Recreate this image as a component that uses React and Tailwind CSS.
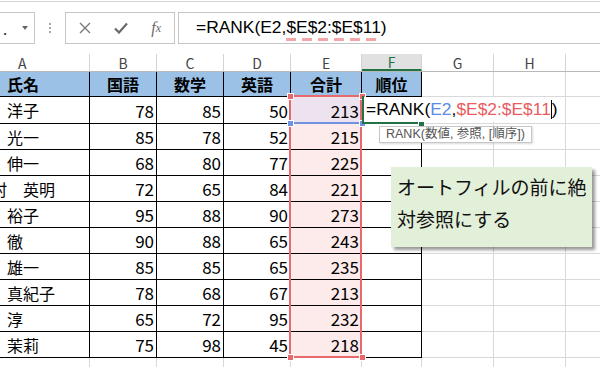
import React from 'react';

const COLS = ['w-[90px]', 'w-[67px]', 'w-[67px]', 'w-[67px]', 'w-[71px]', 'w-[60px]', 'w-[72px]', 'w-[72px]', 'w-[34px]'];
const LETTERS = ['A', 'B', 'C', 'D', 'E', 'F', 'G', 'H', ''];
const HEADS = ['氏名', '国語', '数学', '英語', '合計', '順位'];

const STUDENTS = [
  ['洋子', 78, 85, 50, 213],
  ['光一', 85, 78, 52, 215],
  ['伸一', 68, 80, 77, 225],
  ['村　英明', 72, 65, 84, 221],
  ['裕子', 95, 88, 90, 273],
  ['徹', 90, 88, 65, 243],
  ['雄一', 85, 85, 65, 235],
  ['真紀子', 78, 68, 67, 213],
  ['淳', 65, 72, 95, 232],
  ['茉莉', 75, 98, 45, 218],
];

const Handle = ({ className }) => (
  <div className={`absolute w-[7px] h-[7px] border border-white ${className}`} />
);

const FormulaText = () => (
  <>
    =RANK(E2,
    <span className="relative">
      $E$2:$E$11
      <span className="absolute left-0 right-0 top-full mt-[1px] h-[3px] bg-[repeating-linear-gradient(90deg,#f3a5a8_0_10px,transparent_10px_16px)]" />
    </span>
    )
  </>
);

export default function App() {
  return (
    <div className="relative w-[600px] h-[367px] overflow-hidden bg-white font-['Noto_Sans_CJK_JP',sans-serif] text-black">
      {/* Formula bar */}
      <div className="h-[54px] pt-[1px]">
        <div className="h-px bg-[#d6d6d6]" />
        <div className="mt-[10px] flex h-[32px]">
          <div className="relative w-[35px] border-y border-r border-[#c6c6c6]">
            <span className="absolute left-[3px] top-[8px] text-[15px] leading-none text-[#222]">.</span>
            <div className="absolute left-[22px] top-[13px] w-0 h-0 border-x-[3px] border-x-transparent border-t-[4px] border-t-[#666]" />
          </div>
          <div className="w-[30px] flex flex-col items-center justify-center gap-[2px]">
            <div className="w-[2px] h-[2px] bg-[#a8a8a8]" />
            <div className="w-[2px] h-[2px] bg-[#a8a8a8]" />
            <div className="w-[2px] h-[2px] bg-[#a8a8a8]" />
          </div>
          <div className="w-[110px] flex border border-[#c6c6c6] pl-px">
            <div className="w-[36px] flex items-center justify-center">
              <svg width="12" height="12" viewBox="0 0 12 12">
                <path d="M1 1L11 11M11 1L1 11" stroke="#7a7a7a" strokeWidth="1.4" />
              </svg>
            </div>
            <div className="w-[36px] flex items-center justify-center">
              <svg width="14" height="12" viewBox="0 0 14 12">
                <path d="M1 6.5L5 10.5L13 1.5" stroke="#6a6a6a" strokeWidth="2.2" fill="none" />
              </svg>
            </div>
            <div className="w-[36px] flex items-center justify-center font-['Liberation_Serif',serif] italic text-[#6a6a6a] leading-none">
              <span className="text-[16px]">f</span>
              <span className="text-[12px]">x</span>
            </div>
          </div>
          <div className="ml-[3px] flex-1 -mr-[2px] flex items-center border border-[#c6c6c6] pl-[17px] font-['Liberation_Sans','Noto_Sans_CJK_JP',sans-serif] text-[17.4px] leading-none">
            <FormulaText />
          </div>
        </div>
      </div>

      {/* Column letters */}
      <div className="flex h-[18px] border-b border-[#b8b8b8] text-[14px] text-[#444]">
        {LETTERS.map((l, i) => (
          <div
            key={i}
            className={`${COLS[i]} flex items-center leading-none ${i === 8 ? '' : 'border-r border-[#d4d4d4]'} ${
              i === 0 ? 'justify-start pl-[18px]' : 'justify-center'
            } ${i === 5 ? 'bg-[#e1e1e1] text-[#217346] border-b-2 border-b-[#217346]' : ''}`}
          >
            {l}
          </div>
        ))}
      </div>

      {/* Header row */}
      <div className="flex h-[25px] text-[16px] font-bold leading-none">
        {COLS.map((w, i) => (
          <div
            key={i}
            className={`${w} flex items-center ${
              i < 6
                ? 'bg-[#9bc2e6] border-r border-b border-black'
                : i < 8
                ? 'border-r border-b border-[#d9d9d9]'
                : 'border-b border-[#d9d9d9]'
            } ${i === 0 ? 'pl-[7px]' : 'justify-center'}`}
          >
            {HEADS[i]}
          </div>
        ))}
      </div>

      {/* Data rows */}
      {STUDENTS.map((s, r) => (
        <div key={r} className={`flex ${r === 0 ? 'h-[27px]' : 'h-[26px]'} leading-none`}>
          <div className={`${COLS[0]} flex items-center overflow-hidden whitespace-nowrap border-r border-b border-black pl-[7px] text-[16px]`}>
            <span className={r === 3 ? '-ml-[16px]' : ''}>{s[0]}</span>
          </div>
          {[1, 2, 3, 4].map((c) => (
            <div
              key={c}
              className={`${COLS[c]} flex items-center justify-end border-r border-b border-black pr-[2px] text-[17px] ${
                c === 4 ? (r === 0 ? 'bg-[#ece3ee]' : 'bg-[#fdeaea]') : ''
              }`}
            >
              {s[c]}
            </div>
          ))}
          <div className={`${COLS[5]} border-r border-b border-black`} />
          <div className={`${COLS[6]} border-r border-b border-[#d9d9d9]`} />
          <div className={`${COLS[7]} border-r border-b border-[#d9d9d9]`} />
          <div className={`${COLS[8]} border-b border-[#d9d9d9]`} />
        </div>
      ))}

      {/* Empty row below table */}
      <div className="flex h-[26px]">
        {COLS.map((w, i) => (
          <div key={i} className={`${w} ${i === 8 ? '' : 'border-r border-[#d9d9d9]'} border-b border-[#d9d9d9]`} />
        ))}
      </div>

      {/* Range reference $E$2:$E$11 */}
      <div className="absolute left-[289px] top-[95px] w-[73px] h-[263px] border-2 border-[#e8696b]" />
      <div className="absolute left-[291px] top-[122px] w-[69px] h-[2px] bg-[#7092e0]" />
      <Handle className="left-[287px] top-[93px] bg-[#e8696b]" />
      <Handle className="left-[359px] top-[93px] bg-[#e8696b]" />
      <Handle className="left-[287px] top-[354px] bg-[#e8696b]" />
      <Handle className="left-[359px] top-[354px] bg-[#e8696b]" />
      <Handle className="left-[287px] top-[120px] bg-[#7092e0]" />
      <Handle className="left-[359px] top-[120px] bg-[#7092e0]" />

      {/* Cell F2 in edit mode */}
      <div className="absolute left-[362px] top-[97px] w-[203px] h-[25px] bg-white flex items-center pl-[4px] font-['Liberation_Sans','Noto_Sans_CJK_JP',sans-serif] text-[17.4px] leading-none whitespace-nowrap">
        =RANK(<span className="text-[#5a8be6]">E2</span>,<span className="text-[#ea5b60]">$E$2:$E$11</span>
        <span className="inline-block w-px h-[19px] bg-black align-[-4px]" />)
      </div>
      <div className="absolute left-[362px] top-[96px] w-[2px] h-[28px] bg-[#217346]" />
      <div className="absolute left-[362px] top-[122px] w-[58px] h-[2px] bg-[#217346]" />
      <Handle className="left-[418px] top-[121px] bg-[#217346]" />

      {/* Function tooltip */}
      <div className="absolute left-[379px] top-[126px] w-[153px] h-[17px] flex items-center pl-[6px] bg-white border border-[#c6c6c6] shadow-[1px_1px_2px_rgba(0,0,0,0.15)] text-[12.5px] leading-none text-[#555] whitespace-nowrap font-['Liberation_Sans','Noto_Sans_CJK_JP',sans-serif]">
        RANK(数値, 参照, [順序])
      </div>

      {/* Callout */}
      <div className="absolute left-[391px] top-[167px] w-[201px] h-[80px] bg-[#e2efd9] shadow-[3px_3px_3px_rgba(0,0,0,0.4)] pl-[6px] pt-[4px] text-[19px] leading-[32px] text-[#111] whitespace-nowrap">
        オートフィルの前に絶
        <br />
        対参照にする
      </div>
    </div>
  );
}
